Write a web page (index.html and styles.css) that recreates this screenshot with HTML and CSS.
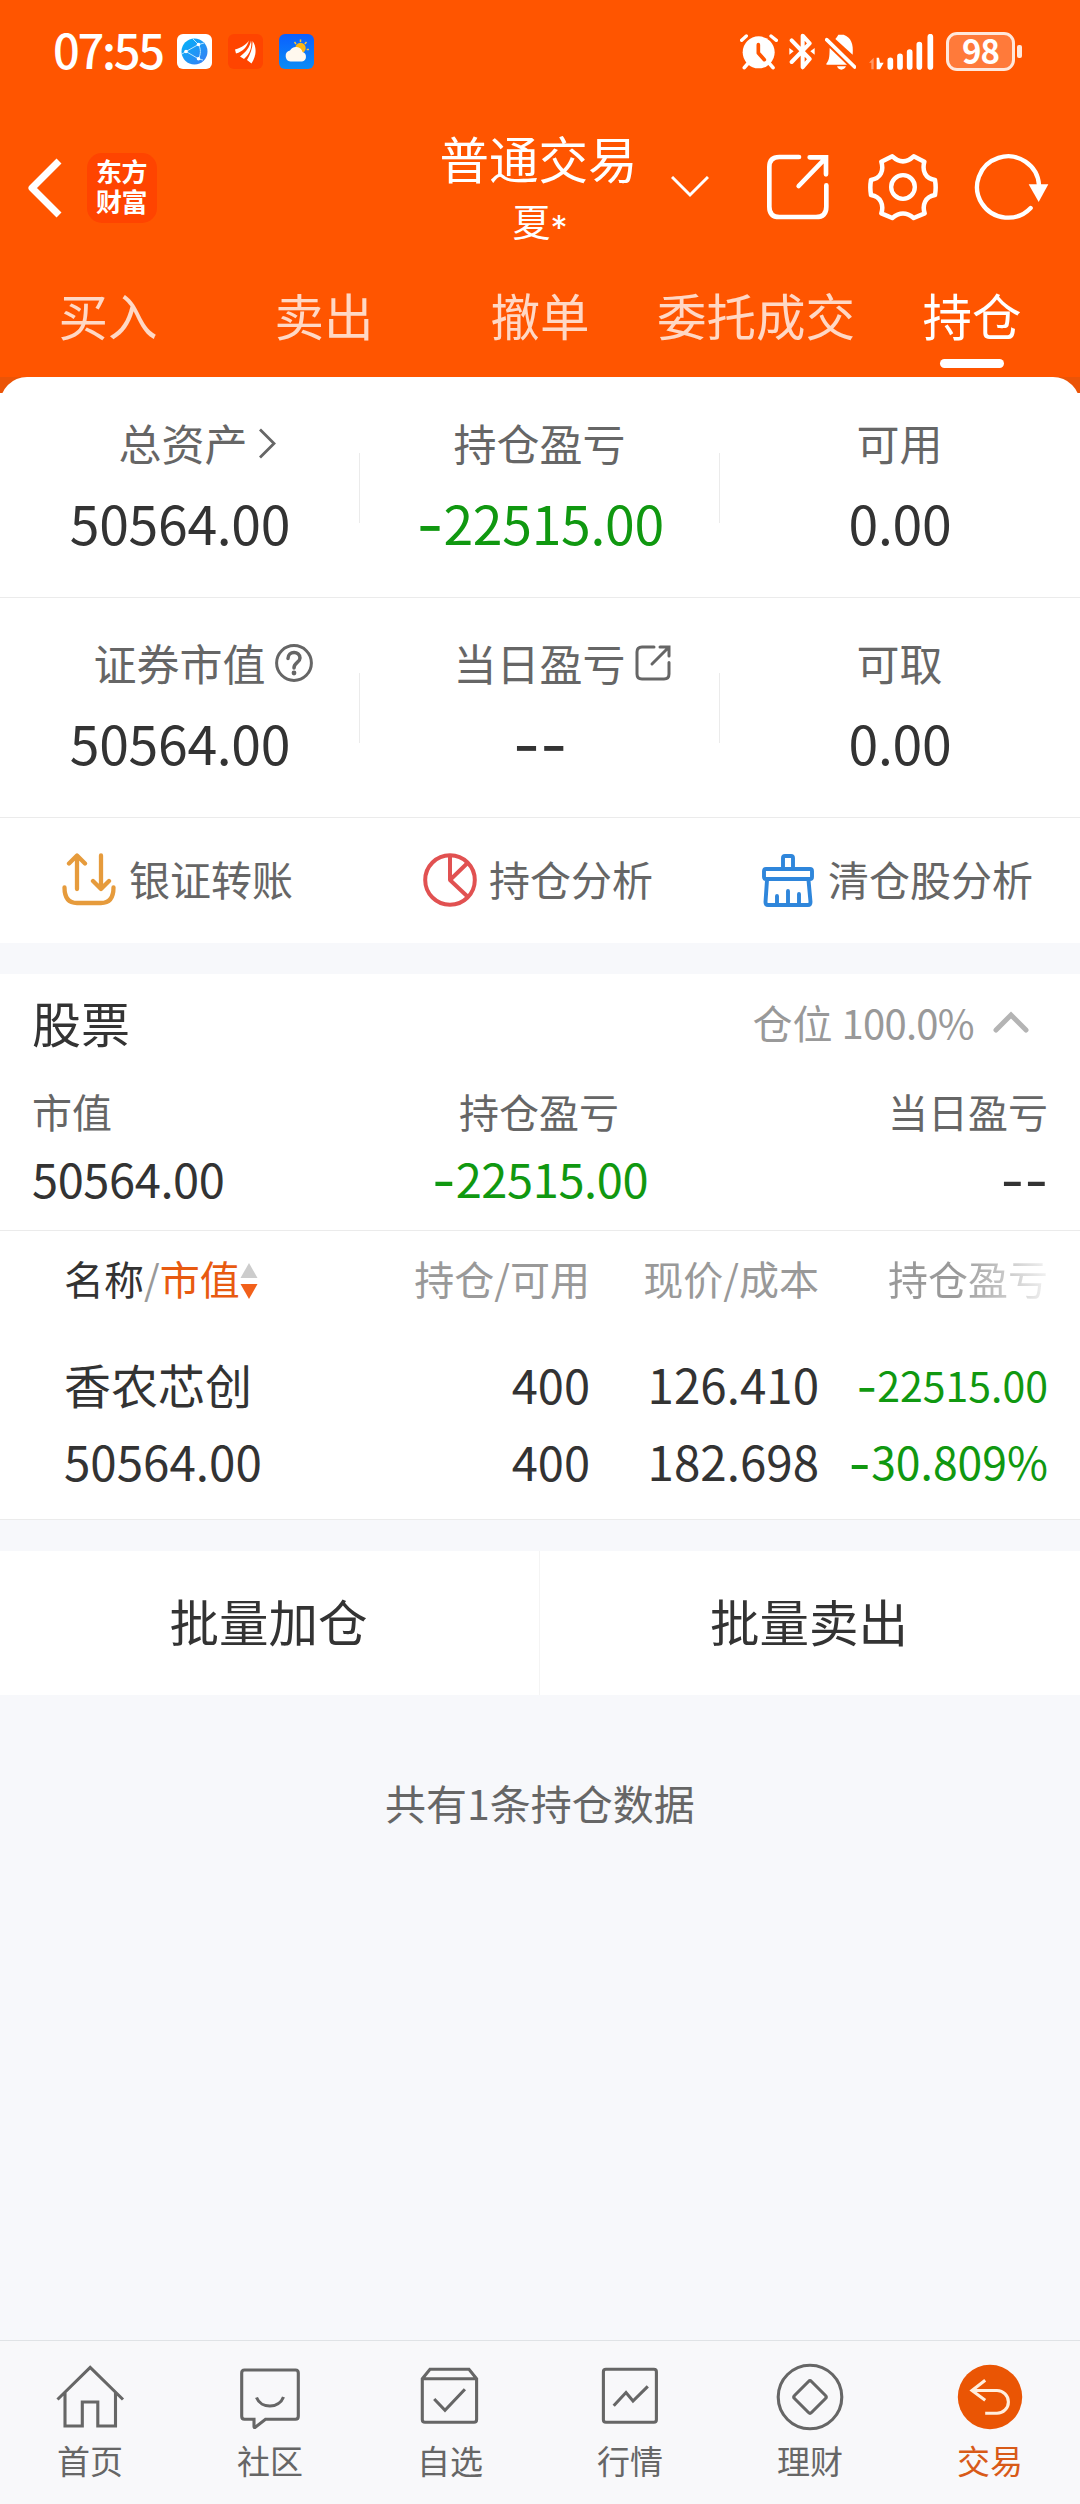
FILE: index.html
```html
<!DOCTYPE html>
<html lang="zh-CN">
<head>
<meta charset="utf-8">
<title>普通交易 - 持仓</title>
<link rel="stylesheet" href="styles.css">
</head>
<body>
<div class="app">
  <header class="header">
    <div class="status">
      <span class="clock">07:55</span>
      <div class="notices">
        <svg width="35" height="35" viewBox="0 0 35 35">
          <defs><linearGradient id="globe" x1="0" y1="0" x2="1" y2="1"><stop offset="0" stop-color="#00b4f8"/><stop offset="1" stop-color="#3b7cf4"/></linearGradient></defs>
          <rect width="35" height="35" rx="6" fill="#fff"/>
          <circle cx="17.5" cy="17.5" r="13" fill="url(#globe)"/>
          <path d="M9 17.5 21.5 10.5C24 15 24 20 21.5 24.800Z M9 17.500 5 20M21.500 10.500 27 9M21.500 25 26 26M21.500 10.500 16 5" fill="none" stroke="#b9e6ff" stroke-width="1"/>
          <circle cx="9" cy="17.500" r="1.800" fill="#fff"/><circle cx="21.500" cy="10.500" r="1.800" fill="#fff"/><circle cx="21.500" cy="24.800" r="1.800" fill="#fff"/>
        </svg>
        <svg width="35" height="35" viewBox="0 0 35 35">
          <rect width="35" height="35" rx="6" fill="#ff4400"/>
          <path d="M7 15.500C14 13.500 19 10 21 6.500 19 13 15 17.500 8 19.500Z M12 22.500C18 18 22 13 23 6.500 24.500 14 21 21 16 25Z M19 26C22.500 20 25 13 24.500 7 28.500 12 29 21 23.500 29.500Z" fill="#fff"/>
        </svg>
        <svg width="35" height="35" viewBox="0 0 35 35">
          <defs><linearGradient id="sky" x1="0" y1="0" x2="0" y2="1"><stop offset="0" stop-color="#0a5fff"/><stop offset="1" stop-color="#0b8cf5"/></linearGradient></defs>
          <rect width="35" height="35" rx="6" fill="url(#sky)"/>
          <circle cx="21.500" cy="14" r="5.200" fill="#fcb713"/>
          <path d="M21.500 5.500v2.500M15.500 8l1.500 2M27.500 8l-1.700 2M30 15.500h-2.300" stroke="#fcc53a" stroke-width="1.500"/>
          <path d="M11.500 27.500a5.600 5.600 0 0 1-.5-11 6.800 6.800 0 0 1 12.500 1.500 4.900 4.900 0 0 1-.5 9.500Z" fill="#fff8ee"/>
        </svg>
      </div>
      <div class="system">
        <svg width="38" height="36" viewBox="0 0 114 108">
          <circle cx="56" cy="55" r="48" fill="#fff"/>
          <path d="M5 19 19 6M93 6 109 19" stroke="#fff" stroke-width="10" stroke-linecap="round"/>
          <path d="M24 88 13 101M88 88 99 101" stroke="#fff" stroke-width="11" stroke-linecap="round"/>
          <path d="M55 32V57L73 77" fill="none" stroke="#ff5500" stroke-width="11" stroke-linecap="round" stroke-linejoin="round"/>
        </svg>
        <svg class="bluetooth" width="26" height="37" viewBox="0 0 78 111">
          <path d="M8 22 62 78 41 103V8L62 31 8 87" fill="none" stroke="#fff" stroke-width="12" stroke-linecap="round" stroke-linejoin="round"/>
          <path d="M1 45 14 55 1 65Z M77 45 64 55 77 65Z" fill="#fff"/>
        </svg>
        <svg class="bell" width="31" height="36" viewBox="0 0 93 108">
          <path d="M4 89C15 76 13 60 14 42L66 92H7Q2 92 4 89ZM31 15Q37 8 40 2H56C78 10 86 29 83 62ZM36 97H63Q58 107 49 107T36 97Z" fill="#fff"/>
          <path d="M5 17 89 99" stroke="#fff" stroke-width="11" stroke-linecap="round"/>
        </svg>
        <svg class="signal" width="65" height="36" viewBox="0 0 195 108">
          <path d="M0 86 14 71V106H7V86Z" fill="#ff9a66"/>
          <path d="M23 71H30L33 86H44L33 106H23Z" fill="#fff"/>
          <path d="M64 79V99M93 67V99M122 54V99M151 32V99M184 8V99" stroke="#fff" stroke-width="17" stroke-linecap="round"/>
        </svg>
        <div class="battery"><span class="battery-level">98</span></div>
      </div>
    </div>

    <div class="titlebar">
      <div class="title-left">
        <svg width="36" height="60" viewBox="0 0 36 60"><path d="M32 3 5 30 32 57" fill="none" stroke="#fff" stroke-width="7" stroke-linejoin="round"/></svg>
        <div class="logo"><div class="logo-text">东方财富</div></div>
      </div>
      <div class="title">
        <div class="title-main">普通交易</div>
        <div class="title-sub">夏<span class="star">*</span></div>
      </div>
      <div class="title-right">
        <svg class="drop" width="38" height="22" viewBox="0 0 38 22"><path d="M1 1 19 19 37 1" fill="none" stroke="#fff" stroke-width="3"/></svg>
        <svg class="share" width="64" height="68" viewBox="18 26 192 204"><path d="M117 38H58Q28 38 28 68V187Q28 218 58 218H168Q199 218 199 187V123M149 39H198V90M196 42 116 125" fill="none" stroke="#fff" stroke-width="14" stroke-linecap="round"/></svg>
        <svg class="gear" width="70" height="68" viewBox="324 22 210 204">
          <path d="M397 32Q429 62 461 32L493 48C486 75 495 98 525 103Q529 126 525 148C495 153 486 178 494 203L461 217Q429 190 397 217L364 203C372 178 363 153 333 148Q329 126 333 103C363 98 372 75 364 48Z" fill="none" stroke="#fff" stroke-width="13.500" stroke-linejoin="round"/>
          <circle cx="429" cy="124" r="35.500" fill="none" stroke="#fff" stroke-width="13"/>
        </svg>
        <svg class="refresh" width="75" height="68" viewBox="643 24 225 204">
          <path d="M838 120A93 92 0 1 0 813 189" fill="none" stroke="#fff" stroke-width="13" stroke-linecap="round"/>
          <path d="M807 118H866L837 171Z" fill="#fff"/>
        </svg>
      </div>
    </div>

    <nav class="tabs">
      <a class="tab">买入</a><a class="tab">卖出</a><a class="tab">撤单</a><a class="tab">委托成交</a><a class="tab active">持仓</a>
    </nav>
  </header>

  <div class="sheet-wrap">
  <section class="sheet">
    <div class="metrics">
      <div class="metric">
        <div class="label shift">总资产<svg class="hang arrow" width="17" height="31" viewBox="0 0 17 31"><path d="M1 1.500 15 15.500 1 29.500" fill="none" stroke="#666" stroke-width="2.800"/></svg></div>
        <div class="value">50564.00</div>
      </div>
      <div class="metric">
        <div class="label">持仓盈亏</div>
        <div class="value down"><span class="minus">-</span>22515.00</div>
      </div>
      <div class="metric">
        <div class="label">可用</div>
        <div class="value">0.00</div>
      </div>
    </div>
    <div class="metrics">
      <div class="metric">
        <div class="label">证券市值<svg class="hang help" width="38" height="38" viewBox="0 0 38 38"><circle cx="19" cy="19" r="17.400" fill="none" stroke="#666" stroke-width="3"/><path d="M13 14.500C13 6.500 25 6.500 25 14 25 18.500 19 18.500 19 24" fill="none" stroke="#666" stroke-width="3.500" stroke-linecap="round"/><circle cx="19" cy="29" r="2.400" fill="#666"/></svg></div>
        <div class="value">50564.00</div>
      </div>
      <div class="metric">
        <div class="label">当日盈亏<svg class="hang link" width="36" height="36" viewBox="0 0 36 36"><path d="M19 2H7Q2 2 2 7V29Q2 34 7 34H29Q34 34 34 29V17.500M25 2H34V11M33 3 17 19" fill="none" stroke="#666" stroke-width="3" stroke-linecap="round"/></svg></div>
        <div class="value"><span class="minus">--</span></div>
      </div>
      <div class="metric">
        <div class="label">可取</div>
        <div class="value">0.00</div>
      </div>
    </div>
    <div class="actions">
      <a class="action a1">
        <svg width="54" height="54" viewBox="0 0 54 54" fill="none" stroke="#e69b3c" stroke-width="4.300" stroke-linecap="round" stroke-linejoin="round"><path d="M15 36V3M7 10.500 15 2.500 23 10.500M39 2.500V36M31 28 39 36 47 28M2.500 34.500Q2.500 50 15 50H39Q51.500 50 51.500 34.500"/></svg>
        <span>银证转账</span>
      </a>
      <a class="action a2">
        <svg width="54" height="54" viewBox="0 0 54 54" fill="none" stroke="#e15151" stroke-width="4"><circle cx="27" cy="27" r="24.800"/><path d="M27 2V27L44.500 10M27 27 45 44" stroke-linejoin="round"/></svg>
        <span>持仓分析</span>
      </a>
      <a class="action a3">
        <svg width="52" height="54" viewBox="0 0 52 54" fill="none" stroke="#2f86db" stroke-width="3.900" stroke-linecap="round" stroke-linejoin="round"><path d="M21 16V5Q21 3 23 3H29Q31 3 31 5V16M4 16H48Q50 16 50 18V24Q50 26 48 26H4Q2 26 2 24V18Q2 16 4 16ZM5 27 3.500 49Q3.500 52 6 52H46Q48.500 52 48.500 49L46.500 27M15 43V50M26 38V50M37 41V50"/></svg>
        <span>清仓股分析</span>
      </a>
    </div>
  </section>
  </div>

  <section class="stocks">
    <div class="stocks-head">
      <h2>股票</h2>
      <div class="position"><span>仓位 <span class="pct">100.0%</span></span><svg width="36" height="22" viewBox="0 0 36 22"><path d="M3 19 18 4 33 19" fill="none" stroke="#b4b4b4" stroke-width="5" stroke-linecap="round"/></svg></div>
    </div>
    <div class="summary">
      <div class="sum left"><div class="sum-label">市值</div><div class="sum-value">50564.00</div></div>
      <div class="sum mid"><div class="sum-label">持仓盈亏</div><div class="sum-value down"><span class="minus">-</span>22515.00</div></div>
      <div class="sum right"><div class="sum-label">当日盈亏</div><div class="sum-value"><span class="minus">--</span></div></div>
    </div>
  </section>

  <section class="table">
    <div class="thead">
      <div class="sorter"><b>名称</b>/<em>市值</em><svg width="18" height="38" viewBox="0 0 18 38"><path d="M9 1 17.500 16H.5Z" fill="#ccc"/><path d="M9 37 17.500 22H.5Z" fill="#f2601a"/></svg></div>
      <div>持仓/可用</div>
      <div>现价/成本</div>
      <div class="fade">持仓盈亏</div>
    </div>
    <div class="row">
      <div class="name">香农芯创</div><div>400</div><div class="price">126.410</div><div class="down small"><span class="minus">-</span>22515.00</div>
      <div class="name worth">50564.00</div><div>400</div><div class="price">182.698</div><div class="down rate"><span class="minus">-</span>30.809%</div>
    </div>
  </section>

  <div class="batch"><a>批量加仓</a><a>批量卖出</a></div>
  <p class="total">共有1条持仓数据</p>

  <nav class="tabbar">
    <a><svg width="70" height="70" viewBox="0 0 70 70"><path d="M2.500 37.500 35.200 5.500 68 37.500M10 30V64H27.300V40H42.800V64H60.500V30"/></svg>首页</a>
    <a><svg width="70" height="70" viewBox="0 0 70 70"><path d="M9.500 8H60.500Q63.300 8 63.300 11V54.300Q63.300 57.300 60.500 57.300H30.500L20 65.500Q19 65.500 19 64.500V57.300H9.500Q6.700 57.300 6.700 54.300V11Q6.700 8 9.500 8ZM21.500 35.500C26 47 44 47 48.500 35"/></svg>社区</a>
    <a><svg width="70" height="70" viewBox="0 0 70 70"><path d="M7.300 16.800 15 7.300H54L61.600 16.800V57.500Q61.600 60.300 59 60.300H10Q7.300 60.300 7.300 57.500ZM7.300 16.800H61.600M19.200 37 30 48.300 49.900 27.300"/></svg>自选</a>
    <a><svg width="70" height="70" viewBox="0 0 70 70"><rect x="8.400" y="7.300" width="53" height="53" rx="2.500"/><path d="M18.700 43.700 31 30.500 38 39 52.800 24.300"/></svg>行情</a>
    <a><svg width="70" height="70" viewBox="0 0 70 70"><circle cx="35" cy="35" r="31.800"/><path d="M33.500 19.500Q35 18 36.500 19.500L50.500 33.500Q52 35 50.500 36.500L36.500 50.500Q35 52 33.500 50.500L19.500 36.500Q18 35 19.500 33.500Z"/></svg>理财</a>
    <a class="current"><svg width="70" height="70" viewBox="0 0 70 70"><circle class="disc" cx="35" cy="35" r="32.200"/><path class="back" d="M30.200 18.300 17 28.500 30.200 38.300M17 28.500H42A11.400 11.400 0 0 1 42 51.300H30.200"/></svg>交易</a>
  </nav>
</div>
</body>
</html>
```
FILE: styles.css
```css
* { box-sizing: border-box; margin: 0; padding: 0; }

body {
  font-family: "Noto Sans CJK SC", "Noto Sans", sans-serif;
  color: #333;
  background: #f7f8fb;
}

svg { display: block; flex: none; }

.app {
  width: 1080px;
  height: 2504px;
  display: flex;
  flex-direction: column;
  white-space: nowrap;
}

/* header */
.header { height: 377px; background: #ff5500; color: #fff; }

.status { height: 104px; display: flex; align-items: center; padding: 0 58px 1px 53px; }
.clock { width: 124px; font-size: 47px; line-height: 60px; letter-spacing: -2.3px; font-weight: 500; margin-top: -5px; }
.notices { display: flex; gap: 16px; }
.system { display: flex; align-items: center; margin-left: auto; }
.bluetooth { margin-left: 11px; }
.bell { margin-left: 10px; }
.signal { margin-left: 13px; }

.battery {
  position: relative;
  width: 69px;
  height: 39px;
  margin: 0 7px 0 12px;
  border: 3px solid #ffe8dc;
  border-radius: 11px;
  background: #ff7a3a;
  display: flex;
  align-items: center;
  justify-content: center;
}
.battery::after {
  content: "";
  position: absolute;
  left: 68px;
  top: 10px;
  width: 5px;
  height: 13px;
  border-radius: 2px;
  background: #ffe8dc;
}
.battery-level { font-size: 33px; line-height: 33px; font-weight: 700; letter-spacing: -1px; margin-top: -3px; }

.titlebar {
  height: 176px;
  padding-bottom: 9px;
  display: grid;
  grid-template-columns: 1fr auto 1fr;
  align-items: center;
}
.title-left { display: flex; align-items: center; padding-left: 27px; gap: 24px; }
.logo {
  width: 70px;
  height: 70px;
  border-radius: 15px;
  background: #ff4400;
  padding: 3px 0 0 9px;
}
.logo-text {
  width: 54px;
  font-size: 26px;
  line-height: 30px;
  font-weight: 700;
  letter-spacing: -0.5px;
  white-space: normal;
}
.title { text-align: center; padding-top: 2px; }
.title-main { font-size: 49.5px; line-height: 62px; margin-left: -3px; }
.title-sub { font-size: 38px; line-height: 62px; }
.star { font-family: "Inter", sans-serif; font-size: 34px; line-height: 0; vertical-align: -4px; }
.title-right { display: flex; align-items: center; margin-top: -1px; }
.drop { margin-left: 33px; }
.share { margin-left: 57px; }
.gear { margin-left: 38px; }
.refresh { margin-left: 36px; }

.tabs { display: grid; grid-template-columns: repeat(5, 216px); }
.tab {
  display: flex;
  flex-direction: column;
  align-items: center;
  font-size: 49.5px;
  line-height: 70px;
  color: #ffd8c5;
}
.tab.active { color: #fff; }
.tab.active::after {
  content: "";
  width: 64px;
  height: 9px;
  margin-top: 9px;
  border-radius: 5px;
  background: #fff;
}

/* account overview */
.sheet-wrap { background: linear-gradient(#eb5407 16px, #fff 16px); }
.sheet { background: #fff; border-radius: 27px 27px 0 0; padding-top: 1px; }
.metrics { display: grid; grid-template-columns: repeat(3, 360px); height: 220px; border-bottom: 1px solid #ebebeb; }
.metric {
  padding-top: 34px;
  text-align: center;
  background: linear-gradient(#ebebeb, #ebebeb) right 75px / 1px 70px no-repeat;
}
.metric:last-child { background: none; }
.label {
  display: flex;
  justify-content: center;
  align-items: center;
  font-size: 43px;
  line-height: 60px;
  color: #666;
  margin-left: -1px;
}
.shift { padding-left: 7px; }
.hang.arrow { margin: 3px -28px 0 11px; }
.hang.help { margin: 2px -47px 0 9px; }
.hang.link { margin: 1px -45px 0 9px; }
.value { margin-top: 15px; font-size: 53.5px; line-height: 70px; letter-spacing: -0.3px; }
.down { color: #109810; }
.minus { font-family: "Inter", sans-serif; font-size: 1.12em; line-height: 0; vertical-align: -0.04em; }

.actions { display: flex; height: 125px; padding-bottom: 1px; }
.action { display: flex; align-items: center; font-size: 41px; line-height: 60px; color: #666; width: 360px; }
.action span { margin-top: -4px; }
.a1 { padding-left: 62px; gap: 13px; }
.a2 { padding-left: 63px; gap: 12px; }
.a3 { padding-left: 42px; gap: 14px; }

/* stock summary */
.stocks { margin-top: 31px; padding: 18px 32px 22px; background: #fff; border-bottom: 1px solid #ebebeb; }
.stocks-head { display: flex; justify-content: space-between; height: 60px; }
.stocks-head h2 { font-size: 49px; line-height: 60px; font-weight: 400; }
.position { display: flex; align-items: center; font-size: 40px; line-height: 60px; color: #999; padding-right: 19px; gap: 19px; }
.pct { letter-spacing: -0.7px; }
.summary { display: grid; grid-template-columns: 1fr 1fr 1fr; margin-top: 34px; }
.sum-label { font-size: 40px; line-height: 50px; color: #666; }
.sum-value { margin-top: 12px; font-size: 47px; line-height: 60px; letter-spacing: -0.4px; }
.mid { text-align: center; }
.mid .sum-label { margin-left: -2px; }
.right { text-align: right; }

/* holdings */
.table { background: #fff; padding: 22px 32px 28px 64px; border-bottom: 1px solid #ebebeb; }
.thead, .row { display: grid; grid-template-columns: 326px 200px 229px 229px; text-align: right; }
.thead { font-size: 40px; line-height: 50px; color: #999; }
.sorter { display: flex; align-items: center; }
.sorter b { font-weight: 400; color: #333; }
.sorter em { font-style: normal; color: #e85a10; }
.sorter svg { margin-top: 6px; }
.fade {
  color: transparent;
  background: linear-gradient(90deg, #999 60%, #f2f2f2 100%);
  background-clip: text;
  -webkit-background-clip: text;
}
.row { margin-top: 51px; font-size: 47px; line-height: 60px; row-gap: 17px; }
.name { text-align: left; }
.worth, .price { font-size: 47.5px; }
.small { font-size: 41px; }
.rate { font-size: 44.5px; }

.batch { margin-top: 31px; height: 144px; background: #fff; display: grid; grid-template-columns: 1fr 1fr; }
.batch a { display: flex; align-items: center; justify-content: center; font-size: 49.5px; padding: 0 2px 5px 0; }
.batch a:first-child { border-right: 1px solid #f4f4f4; }
.total { margin-top: 77px; text-align: center; font-size: 41px; line-height: 60px; color: #666; }

/* bottom navigation */
.tabbar {
  margin-top: auto;
  height: 164px;
  border-top: 1px solid #e0e3e6;
  background: #f8f8fa;
  display: grid;
  grid-template-columns: repeat(6, 180px);
  padding-top: 21px;
}
.tabbar a { display: flex; flex-direction: column; align-items: center; gap: 6px; font-size: 33px; line-height: 44px; color: #666; }
.tabbar svg { fill: none; stroke: #666; stroke-width: 3.1; }
.tabbar .current { color: #d85a18; }
.tabbar .disc { fill: #ea5504; stroke: none; }
.tabbar .back { stroke: #ffeede; }
```
